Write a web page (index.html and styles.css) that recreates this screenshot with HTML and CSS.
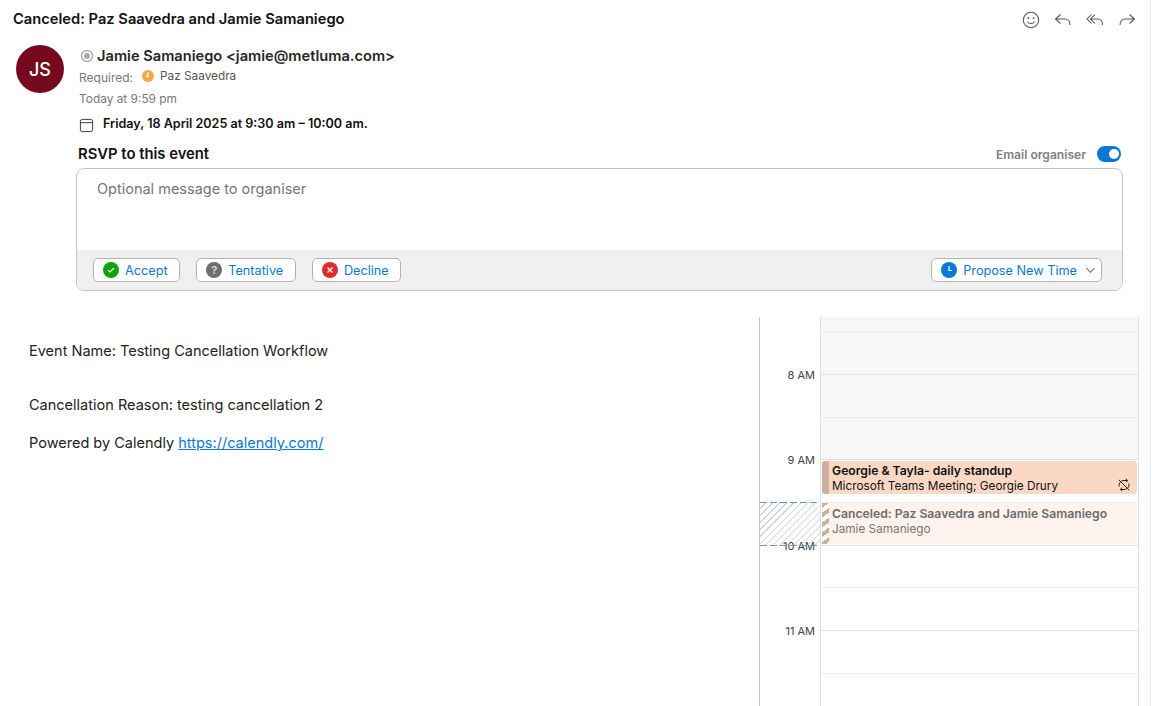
FILE: index.html
```html
<!DOCTYPE html>
<html lang="en">
<head>
<meta charset="utf-8">
<title>Canceled: Paz Saavedra and Jamie Samaniego</title>
<link rel="stylesheet" href="styles.css">
</head>
<body>
<div class="page">
  <header class="subject-bar">
    <h1 class="subject">Canceled: Paz Saavedra and Jamie Samaniego</h1>
    <div class="actions">
      <svg class="act" viewBox="0 0 18 18"><circle cx="9" cy="9" r="7.7"/><circle class="dot" cx="6.4" cy="7" r=".9"/><circle class="dot" cx="11.6" cy="7" r=".9"/><path d="M5.4 10.6c1 2.6 6.2 2.6 7.2 0"/></svg>
      <svg class="act" viewBox="0 0 18 18"><path d="M6.5 3.5 1.5 8l5 4.5M1.5 8h9c3.5 0 5.5 2 5.5 6"/></svg>
      <svg class="act" viewBox="0 0 18 18"><path d="M5.5 3.5 1 8l4.500 4.500M9 3.500 4.500 8 9 12.500M4.500 8h7c3 0 5 2 5 6"/></svg>
      <svg class="act" viewBox="0 0 18 18"><path d="M11.500 3.500 16.500 8l-5 4.500M16.500 8h-9C4 8 2 10 2 14"/></svg>
    </div>
  </header>

  <section class="head">
    <div class="avatar">JS</div>
    <div class="meta">
      <div class="from">
        <svg class="status" viewBox="0 0 14 14"><circle cx="7" cy="7" r="5.500"/><circle class="fill" cx="7" cy="7" r="3"/></svg>
        <span>Jamie Samaniego &lt;jamie@metluma.com&gt;</span>
      </div>
      <div class="req">
        <span class="req-label">Required:</span>
        <svg class="tent" viewBox="0 0 14 14"><circle class="tent-bg" cx="7" cy="7" r="6"/><path class="tent-hand" d="M7 3.500V7.500H4.800"/></svg>
        <span class="req-name">Paz Saavedra</span>
      </div>
      <div class="time">Today at 9:59 pm</div>
      <div class="when">
        <svg class="cal-ic" viewBox="0 0 16 16"><rect x="1.500" y="1.500" width="13" height="13" rx="2"/><path d="M1.500 5h13"/></svg>
        <strong>Friday, 18 April 2025 at 9:30 am – 10:00 am.</strong>
      </div>
    </div>
  </section>

  <section class="rsvp">
    <div class="rsvp-top">
      <h2 class="rsvp-title">RSVP to this event</h2>
      <div class="org">
        <span>Email organiser</span>
        <span class="switch"><span class="knob"></span></span>
      </div>
    </div>
    <div class="box">
      <div class="msg">Optional message to organiser</div>
      <div class="bar">
        <div class="btns">
          <button class="btn"><span class="ic green"><svg viewBox="0 0 16 16"><path d="M5 8.200 7 10l4-4"/></svg></span>Accept</button>
          <button class="btn"><span class="ic gray">?</span>Tentative</button>
          <button class="btn"><span class="ic red"><svg viewBox="0 0 16 16"><path d="M5.500 5.500l5 5M10.500 5.500l-5 5"/></svg></span>Decline</button>
        </div>
        <button class="btn propose"><span class="ic blue"><svg viewBox="0 0 16 16"><path d="M8 4v4.500h3"/></svg></span>Propose New Time<svg class="chev" viewBox="0 0 12 12"><path d="M1.500 3.500 6 8l4.500-4.500"/></svg></button>
      </div>
    </div>
  </section>

  <main class="lower">
    <article class="body">
      <p class="p1">Event Name: Testing Cancellation Workflow</p>
      <p class="p2">Cancellation Reason: testing cancellation 2</p>
      <p class="p3">Powered by Calendly <a href="#">https://calendly.com/</a></p>
    </article>
    <aside class="calendar">
      <div class="hours">
        <div class="hr off first"></div>
        <div class="hr off"><span>8 AM</span></div>
        <div class="hr off half"></div>
        <div class="hr off"><span>9 AM</span></div>
        <div class="hr half"></div>
        <div class="hr"><span>10 AM</span></div>
        <div class="hr half"></div>
        <div class="hr"><span>11 AM</span></div>
        <div class="hr half"></div>
        <div class="hr"></div>
      </div>
      <div class="hatch"></div>
      <div class="event busy">
        <div class="ev-title">Georgie &amp; Tayla- daily standup</div>
        <div class="ev-sub">Microsoft Teams Meeting; Georgie Drury</div>
        <svg class="repeat" viewBox="0 0 14 14"><path d="M2.200 8.500C1.500 5 3.800 2.500 7 2.500h3.500M8.800.8l1.900 1.700-1.900 1.800M11.800 5.500c.7 3.500-1.600 6-4.800 6H3.500M5.200 13.200 3.300 11.500l1.900-1.800M1.800 1.800l10.400 10.400"/></svg>
      </div>
      <div class="event cancelled">
        <div class="ev-title">Canceled: Paz Saavedra and Jamie Samaniego</div>
        <div class="ev-sub">Jamie Samaniego</div>
      </div>
    </aside>
  </main>
</div>
</body>
</html>
```
FILE: styles.css
```css
* { box-sizing: border-box; }
html, body { margin: 0; height: 100%; overflow: hidden; background: #fff; }
body { font-family: Inter, "Liberation Sans", sans-serif; color: #1a1a1a; }
.page { width: 1151px; height: 706px; border-right: 1px solid #ececec; position: relative; }

.subject-bar { height: 38px; display: flex; align-items: center; justify-content: space-between; padding: 0 14px 0 13px; }
.subject { margin: 0; font-size: 14.700px; line-height: 38px; font-weight: 600; color: #111; }
.actions { display: flex; gap: 14px; margin-top: 1px; }
.act { width: 18px; height: 18px; fill: none; stroke: #555; stroke-width: 1.050; }
.act .dot { fill: #555; stroke: none; }

.head { display: flex; padding: 7px 0 0 16px; height: 100px; }
.avatar { width: 48px; height: 48px; border-radius: 50%; background: #77091f; color: #fff; font-size: 18px; font-weight: 500; display: flex; align-items: center; justify-content: center; }
.meta { margin: 0 0 0 15px; }
.from { display: flex; align-items: center; gap: 3px; height: 22px; font-size: 14.650px; font-weight: 600; color: #262626; margin-left: 1px; }
.status { width: 14px; height: 14px; fill: none; stroke: #aaa; stroke-width: 1.400; }
.status .fill { fill: #aaa; stroke: none; }
.req { display: flex; align-items: center; height: 20px; margin-top: -1px; font-size: 12px; color: #777; }
.req-label { position: relative; top: 1px; width: 62px; }
.tent { width: 14px; height: 14px; margin-right: 5px; }
.tent-bg { fill: #f9a648; }
.tent-hand { fill: none; stroke: #fff; stroke-width: 1.300; }
.req-name { color: #555; font-size: 11.800px; }
.time { font-size: 11.900px; line-height: 24px; margin-top: 1px; color: #777; }
.when { display: flex; align-items: flex-start; height: 20px; margin-top: 5px; font-size: 12.570px; color: #111; }
.when strong { font-weight: 600; line-height: 16px; margin-left: 9px; }
.cal-ic { width: 15px; height: 15px; margin-top: 2px; fill: none; stroke: #333; stroke-width: 1; }

.rsvp { padding: 0 27px 0 76px; height: 179px; }
.rsvp-top { display: flex; justify-content: space-between; align-items: center; height: 27px; padding: 5px 2px 0 2px; }
.rsvp-title { margin: 0; font-size: 14.800px; font-weight: 600; color: #111; }
.org { display: flex; align-items: center; gap: 11px; font-size: 12.100px; font-weight: 600; color: #808080; }
.switch { width: 24px; height: 16px; border-radius: 8px; background: #0a78d6; display: flex; align-items: center; justify-content: flex-end; padding-right: 2px; }
.knob { width: 10px; height: 10px; border-radius: 50%; background: #fff; }
.box { height: 123px; margin-top: 3px; border: 1px solid #c4c4c4; border-radius: 8px; overflow: hidden; }
.msg { height: 81px; padding: 12px 20px; font-size: 14.500px; line-height: 16px; color: #757575; }
.bar { height: 41px; background: #f0f0f0; display: flex; justify-content: space-between; align-items: flex-start; padding: 8px 20px 0 16px; }
.btns { display: flex; gap: 16px; }
.btn { height: 24px; display: flex; align-items: center; gap: 6px; padding: 0 11.700px 0 9px; background: #fff; border: 1px solid #b2b2b2; border-radius: 5px; font: 400 12.700px Inter, "Liberation Sans", sans-serif; color: #0a78d6; }
.ic { width: 16px; height: 16px; border-radius: 50%; display: flex; align-items: center; justify-content: center; color: #fff; font-size: 11px; font-weight: 700; }
.ic svg { width: 16px; height: 16px; fill: none; stroke: #fff; stroke-width: 1.200; }
.green { background: #13a10e; }
.gray { background: #6e6e6e; color: #d8d8d8; }
.red { background: #dd2c2c; }
.blue { background: #0a78d6; }
.propose { padding-right: 5px; padding-left: 9px; }
.chev { width: 11px; height: 11px; margin-left: 2px; fill: none; stroke: #666; stroke-width: 1.100; }

.lower { display: flex; height: 389px; justify-content: space-between; padding-right: 11px; }
.body { padding: 25px 0 0 29px; font-size: 14.530px; color: #222; }
.body p { margin: 0; line-height: 18px; }
.body .p2 { margin-top: 36px; }
.body .p3 { margin-top: 20px; }
.body a { color: #0a78d6; text-decoration: underline; }

.calendar { width: 380px; height: 389px; position: relative; overflow: hidden; border-left: 1px solid #c6c6c6; border-right: 1px solid #e0e0e0; }
.hours { display: flex; flex-direction: column; }
.hr { height: 42.670px; flex: none; margin-left: 60px; border-bottom: 1px solid #e1e1e1; border-left: 1px solid #e1e1e1; position: relative; }
.hr.first { height: 15.400px; border-bottom-color: #ececec; }
.hr.off { background: #f7f7f7; }
.hr.half { border-bottom-color: #ececec; }
.hr span { position: absolute; right: calc(100% + 6px); bottom: -8px; font-size: 11px; line-height: 14px; color: #444; white-space: nowrap; }
.hatch { position: absolute; left: 0; top: 185px; width: 60px; height: 44px; background:
  repeating-linear-gradient(90deg, #6f96b5 0 7px, transparent 7px 10px) top / 100% 1px no-repeat,
  repeating-linear-gradient(90deg, #6f96b5 0 7px, transparent 7px 10px) bottom / 100% 1px no-repeat,
  repeating-linear-gradient(135deg, transparent 0 4px, #c9d5e0 4px 5px); }
.event { position: absolute; left: 62px; right: 1px; padding-left: 10px; font-size: 11.750px; line-height: 15px; border-radius: 3px; }
.event .ev-title { font-weight: 600; font-size: 12.200px; }
.event .ev-sub { margin-top: 1px; }
.busy { top: 144px; height: 33px; padding-top: 2px; background: #fad8c3; color: #111; }
.busy::before { content: ""; position: absolute; left: 0; top: 0; bottom: 0; width: 7px; border-radius: 3px 0 0 3px; background: #cdb09e; }
.cancelled { top: 186px; height: 41px; padding-top: 3px; background: #fdf2ec; color: #6c6c6c; }
.cancelled .ev-sub { color: #777; }
.cancelled::before { content: ""; position: absolute; left: 0; top: 0; bottom: 0; width: 7px; background: repeating-linear-gradient(145deg, #cdb09e 0 4px, #fff 4px 8px); }
.repeat { position: absolute; right: 6px; bottom: 2px; width: 14px; height: 14px; fill: none; stroke: #222; stroke-width: 1; }
```
